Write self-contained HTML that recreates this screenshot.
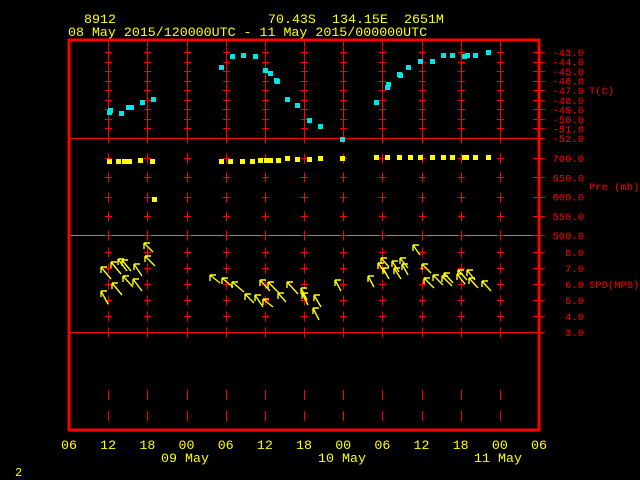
<!DOCTYPE html>
<html><head><style>
html,body{margin:0;padding:0;background:#000;width:640px;height:480px;overflow:hidden}
svg{display:block}
text{font-family:"Liberation Mono","DejaVu Sans Mono",monospace}
</style></head><body>
<svg width="640" height="480" viewBox="0 0 640 480" xmlns="http://www.w3.org/2000/svg">
<rect width="640" height="480" fill="#000"/>
<g fill="#ffff00" font-size="13.3">
<text x="84" y="23">8912</text>
<text x="268" y="23">70.43S</text>
<text x="332" y="23">134.15E</text>
<text x="404" y="23">2651M</text>
<text x="68" y="36">08 May 2015/120000UTC - 11 May 2015/000000UTC</text>
</g>
<g stroke="#ff0000" stroke-width="1" shape-rendering="crispEdges">
<line x1="69" y1="138.5" x2="545" y2="138.5"/>
<line x1="69" y1="235.5" x2="545" y2="235.5" stroke="#888"/>
<line x1="69" y1="332.5" x2="545" y2="332.5"/>
</g>
<g id="grid" stroke="#ff0000" stroke-width="1" shape-rendering="crispEdges"></g>
<rect x="69" y="40" width="470" height="390" fill="none" stroke="#ff0000" stroke-width="3" shape-rendering="crispEdges"/>
<g id="rticks" stroke="#ff0000" stroke-width="1" shape-rendering="crispEdges"></g>
<g id="rlab" fill="#ff0000" font-size="10.5" text-anchor="end"></g>
<g fill="#ff0000" font-size="10.5">
<text x="589" y="94">T(C)</text>
<text x="589" y="190">Pre (mb)</text>
<text x="589" y="288">SPD(MPS)</text>
</g>
<g id="cy" fill="#00e5e5"></g>
<g id="ye" fill="#ffff00"></g>
<g id="ar" stroke="#ffff00" stroke-width="1.4" fill="none"></g>
<g id="blab" fill="#ffff00" font-size="13.3" text-anchor="middle"></g>
<g fill="#ffff00" font-size="13.3" text-anchor="middle">
<text x="185" y="462">09 May</text>
<text x="342" y="462">10 May</text>
<text x="498" y="462">11 May</text>
</g>
<text x="15" y="476" fill="#ffff00" font-size="12">2</text>
<script>
var NS="http://www.w3.org/2000/svg";
function el(p,t,a,txt){var e=document.createElementNS(NS,t);for(var k in a)e.setAttribute(k,a[k]);if(txt)e.textContent=txt;document.getElementById(p).appendChild(e);}
var xs=[];for(var k=1;k<=11;k++)xs.push(Math.round(69+39.17*k)+0.5);
var T=[],P=[],S=[];
for(var i=0;i<10;i++)T.push(52+i*9.56);
for(var i=0;i<5;i++)P.push(158+i*19.3);
for(var i=0;i<6;i++)S.push(252+i*16);
var all=T.concat(P).concat(S);
xs.forEach(function(x){
 all.forEach(function(y){y=Math.round(y)+0.5;
  el("grid","line",{x1:x,y1:y-5,x2:x,y2:y+5});
  el("grid","line",{x1:x-3.5,y1:y,x2:x+3.5,y2:y});});
 el("grid","line",{x1:x,y1:41,x2:x,y2:47});
 el("grid","line",{x1:x,y1:390,x2:x,y2:400});
 el("grid","line",{x1:x,y1:411,x2:x,y2:421});
 el("grid","line",{x1:x,y1:328,x2:x,y2:337});
});
var tl=["-43.0","-44.0","-45.0","-46.0","-47.0","-48.0","-49.0","-50.0","-51.0","-52.0"];
T.forEach(function(y,i){el("rticks","line",{x1:533,y1:Math.round(y)+.5,x2:545,y2:Math.round(y)+.5});el("rlab","text",{x:584,y:y+4},tl[i]);});
["700.0","650.0","600.0","550.0","500.0"].forEach(function(t,i){var y=P[i];el("rticks","line",{x1:533,y1:Math.round(y)+.5,x2:545,y2:Math.round(y)+.5});el("rlab","text",{x:584,y:y+4},t);});
["8.0","7.0","6.0","5.0","4.0","3.0"].forEach(function(t,i){var y=S[i];el("rticks","line",{x1:533,y1:Math.round(y)+.5,x2:545,y2:Math.round(y)+.5});el("rlab","text",{x:584,y:y+4},t);});
var bl=["06","12","18","00","06","12","18","00","06","12","18","00","06"];
bl.forEach(function(t,i){el("blab","text",{x:69+39.17*i,y:449},t);});
var cy=[[109,112],[110,110],[121,113],[128,107],[131,107],[142,102],[153,99],[221,67],[232,56],[243,55],[255,56],[265,70],[270,73],[276,80],[277,81],[287,99],[297,105],[309,120],[320,126],[342,139],[376,102],[387,87],[388,84],[399,74],[400,75],[408,67],[420,61],[432,61],[443,55],[452,55],[464,56],[467,55],[475,55],[488,52]];
cy.forEach(function(p){el("cy","rect",{x:p[0]-2,y:p[1]-2,width:5,height:5});});
var ye=[[109,161],[118,161],[124,161],[129,161],[140,160],[152,161],[154,199],[221,161],[230,161],[242,161],[252,161],[260,160],[266,160],[270,160],[278,160],[287,158],[297,159],[309,159],[320,158],[342,158],[376,157],[387,157],[399,157],[410,157],[420,157],[432,157],[443,157],[452,157],[464,157],[466,157],[475,157],[488,157]];
ye.forEach(function(p){el("ye","rect",{x:p[0]-2,y:p[1]-2,width:5,height:5});});
var ar=[[101,267,10,12],[111,262,10,12],[118,259,9,12],[122,260,9,11],[134,264,8,12],[112,283,10,12],[101,291,7,13],[123,276,10,11],[133,279,9,12],[144,243,9,9],[145,256,10,10],
[210,275,10,8],[222,278,11,9],[232,282,12,10],[245,294,9,9],[255,295,8,12],[260,280,10,11],[263,299,10,8],[268,282,12,12],[278,293,8,9],[287,282,11,12],[301,288,6,12],[302,293,6,12],[314,295,7,12],[313,308,6,12],[335,280,6,11],
[368,276,6,11],[378,263,8,11],[381,258,8,9],[383,268,6,11],[392,261,7,11],[394,268,7,11],[400,258,8,10],[402,264,6,11],[413,245,7,10],[422,264,9,9],[424,278,10,10],[433,275,10,10],[442,276,10,10],[444,273,9,10],[457,274,8,10],[458,270,9,10],[467,270,8,10],[469,278,9,10],[482,281,9,10]];
ar.forEach(function(a){var x=a[0],y=a[1];el("ar","path",{d:"M"+x+" "+y+"L"+(x+a[2])+" "+(y+a[3])+"M"+x+" "+y+"h6M"+x+" "+y+"v6"});});
</script>
</svg>
</body></html>
